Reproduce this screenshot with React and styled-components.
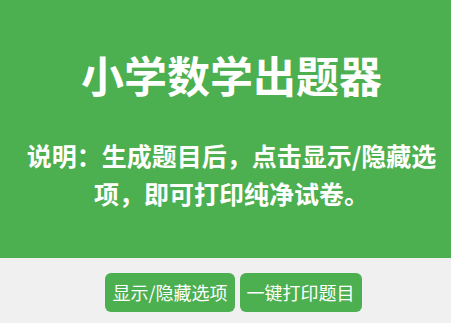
import React from 'react';
import styled, { createGlobalStyle } from 'styled-components';

const GlobalStyle = createGlobalStyle`
  html, body {
    margin: 0;
    padding: 0;
    background: #f0f0f0;
    font-family: "Noto Sans CJK SC", "Noto Sans", sans-serif;
  }
`;

const Header = styled.header`
  background: #4caf50;
  color: #fff;
  text-align: center;
  padding: 43px 4px 46px 16px;
`;

const Title = styled.h1`
  margin: 0 0 31px;
  font-size: 43px;
  font-weight: 700;
  line-height: 62px;
`;

const Note = styled.p`
  margin: 0;
  font-size: 25px;
  font-weight: 700;
  line-height: 38px;
`;

const ButtonRow = styled.div`
  display: flex;
  justify-content: center;
  gap: 5px;
  padding: 15px 0 0 16px;
`;

const Button = styled.button`
  background: #4caf50;
  color: #fff;
  border: none;
  border-radius: 6px;
  padding: 6px 7px;
  font-family: inherit;
  font-size: 18px;
  line-height: 27px;
  cursor: pointer;
`;

export default function App() {
  return (
    <>
      <GlobalStyle />
      <Header>
        <Title>小学数学出题器</Title>
        <Note>说明：生成题目后，点击显示/隐藏选项，即可打印纯净试卷。</Note>
      </Header>
      <ButtonRow>
        <Button>显示/隐藏选项</Button>
        <Button>一键打印题目</Button>
      </ButtonRow>
    </>
  );
}
